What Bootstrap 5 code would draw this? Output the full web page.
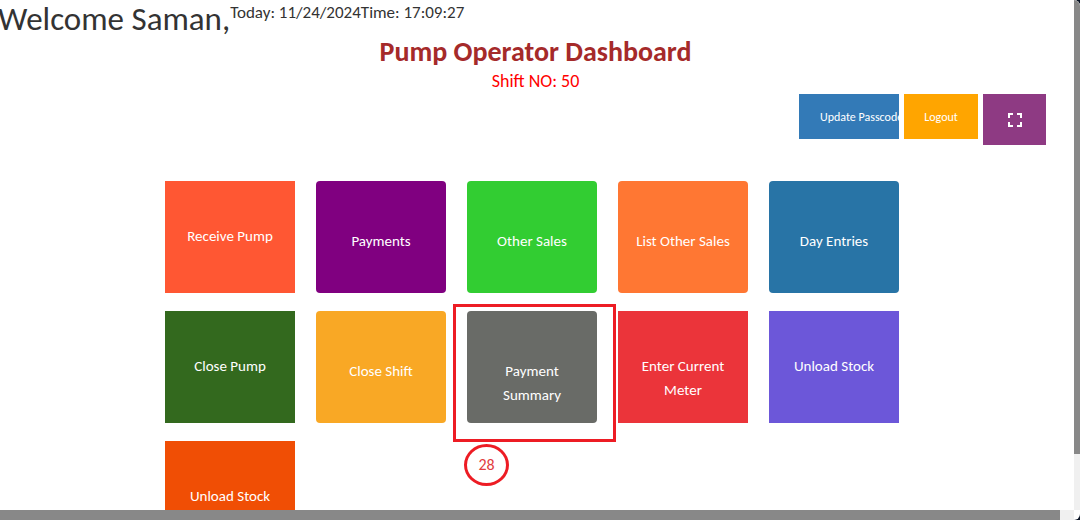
<!DOCTYPE html>
<html lang="en">
<head>
<meta charset="utf-8">
<meta name="viewport" content="width=device-width, initial-scale=1">
<title>Pump Operator Dashboard</title>
<link href="https://cdn.jsdelivr.net/npm/bootstrap@5.3.0/dist/css/bootstrap.min.css" rel="stylesheet">
<style>
body { font-family: Carlito, Calibri, Lato, sans-serif; color: #333; background: #0b1526; }
.shell { display: grid; grid-template: minmax(0, 1fr) 10px / minmax(0, 1fr) 6px; background: #fff; border-radius: 0 6px 6px 0; }
.bar-track { background: #f0f0f0; }
.bar-thumb { background: #888; }
.v-thumb { height: 89%; }
.h-thumb { width: 98.7%; }
.topline { height: 36px; margin-left: -2px; }
.welcome { font-size: 33px; line-height: 38px; }
.clock { font-size: 17px; line-height: 26px; }
.heads { padding-right: 3px; }
.title { font-size: 28px; line-height: 32px; color: #a52a2a; }
.shift { font-size: 18px; line-height: 26px; color: #f00; }
.actions { gap: 5px; padding-right: 28px; }
.act { height: 45px; border: 0; color: #fff; font-size: 12px; overflow: hidden; white-space: nowrap; padding: 0 21px; }
.act-update { width: 100px; background: #337ab7; text-align: left; }
.act-logout { width: 74px; background: #ffa500; padding: 0; }
.act-full { width: 63px; height: 51px; background: #8e3a83; padding: 0; }
.act-full svg { display: block; margin: 0 auto; }
.tiles { display: grid; grid-template-columns: repeat(5, minmax(0, 1fr)); gap: 18px 21px; margin: 36px 175px 0 165px; }
.tile { width: 100%; height: 112px; border: 0; padding: 43px 16px 0; color: #fff; font-size: 15px; line-height: 24px; display: flex; justify-content: center; align-items: flex-start; }
.tile-soft { border-radius: 4px; padding-top: 48px; }
.tile-narrow { padding-left: 32px; padding-right: 32px; }
.mark-box { left: -14px; top: -7px; width: 163px; height: 138px; border: 3px solid #ed1c24; pointer-events: none; }
.mark-num { left: -3px; top: 133px; width: 45px; height: 42px; border: 3px solid #ed1c24; border-radius: 50%; color: #e23b40; font-size: 16px; line-height: 36px; text-align: center; }
</style>
</head>
<body>
<div class="shell vh-100 overflow-hidden">
  <main class="overflow-hidden">
    <header class="topline d-flex align-items-start">
      <span class="welcome">Welcome Saman,</span>
      <span class="clock">Today: 11/24/2024</span><span class="clock">Time: 17:09:27</span>
    </header>
    <div class="heads text-center">
      <h1 class="title fw-bold m-0">Pump Operator Dashboard</h1>
      <p class="shift m-0">Shift NO: 50</p>
    </div>
    <div class="actions d-flex justify-content-end align-items-start">
      <button type="button" class="act act-update">Update Passcode</button>
      <button type="button" class="act act-logout">Logout</button>
      <button type="button" class="act act-full" aria-label="Full screen">
        <svg width="14" height="14" viewBox="0 0 14 14" fill="none" stroke="#fff" stroke-width="2"><path d="M1 5V1H5M9 1H13V5M13 9V13H9M5 13H1V9"/></svg>
      </button>
    </div>
    <div class="tiles">
      <button type="button" class="tile" style="background:#ff5733">Receive Pump</button>
      <button type="button" class="tile tile-soft" style="background:#800080">Payments</button>
      <button type="button" class="tile tile-soft" style="background:#32cd32">Other Sales</button>
      <button type="button" class="tile tile-soft" style="background:#ff7733">List Other Sales</button>
      <button type="button" class="tile tile-soft" style="background:#2874a6">Day Entries</button>
      <button type="button" class="tile" style="background:#33691e">Close Pump</button>
      <button type="button" class="tile tile-soft" style="background:#f9a825">Close Shift</button>
      <div class="position-relative">
        <button type="button" class="tile tile-soft tile-narrow" style="background:#696b67">Payment Summary</button>
        <div class="mark-box position-absolute"></div>
        <div class="mark-num position-absolute">28</div>
      </div>
      <button type="button" class="tile" style="background:#eb343a">Enter Current Meter</button>
      <button type="button" class="tile" style="background:#6c57d9">Unload Stock</button>
      <button type="button" class="tile" style="background:#f04e05">Unload Stock</button>
    </div>
  </main>
  <div class="bar-track"><div class="bar-thumb v-thumb"></div></div>
  <div class="bar-track"><div class="bar-thumb h-thumb h-100"></div></div>
</div>
<script src="https://cdn.jsdelivr.net/npm/bootstrap@5.3.0/dist/js/bootstrap.bundle.min.js"></script>
</body>
</html>
